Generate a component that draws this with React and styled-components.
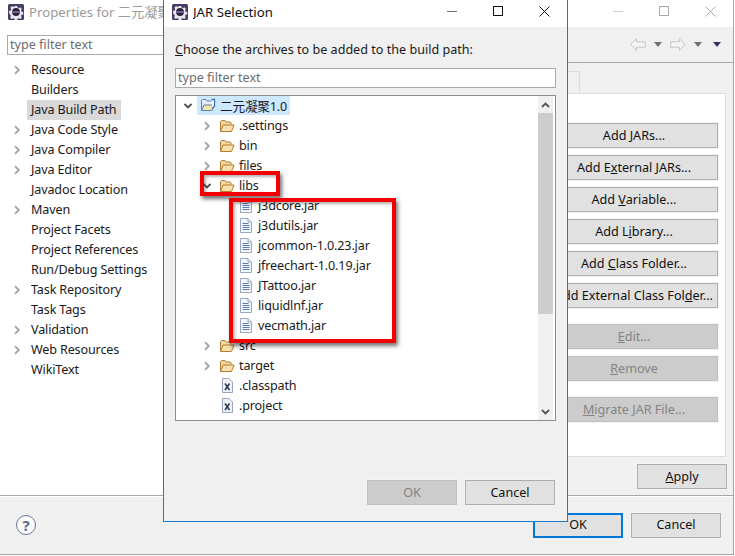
import React from 'react';
import styled, { createGlobalStyle } from 'styled-components';

const GlobalStyle = createGlobalStyle`
  html, body {
    margin: 0;
    padding: 0;
    background: #fff;
  }
  body {
    font-family: "Noto Sans", "Noto Sans CJK SC", sans-serif;
    font-size: 12.6px;
    color: #1a1a1a;
  }
`;

const Desktop = styled.div`
  position: relative;
  width: 735px;
  height: 556px;
  overflow: hidden;
`;

/* windows */
const BackWindow = styled.div`
  position: absolute;
  left: 0;
  top: 0;
  width: 734px;
  height: 555px;
  box-sizing: border-box;
  display: flex;
  flex-direction: column;
  background: #f0f0f0;
  border-right: 1px solid #a5a5a5;
  border-bottom: 1px solid #a5a5a5;
`;

const FrontWindow = styled.div`
  position: absolute;
  left: 163px;
  top: 0;
  width: 405px;
  height: 522px;
  box-sizing: border-box;
  display: flex;
  flex-direction: column;
  background: #f0f0f0;
  border: 1px solid #1979ca;
  border-top: 0;
`;

const TitleBar = styled.div`
  height: 27px;
  flex: none;
  display: flex;
  align-items: center;
  background: #fff;
  padding-left: ${p => p.$pad}px;
`;

const Title = styled.span`
  flex: 1;
  margin-left: 5px;
  padding-bottom: 4px;
  font-size: 13.2px;
  white-space: nowrap;
  overflow: hidden;
  color: ${p => (p.$dim ? '#9a9a9a' : '#111')};
`;

const WinButton = styled.div`
  width: 46px;
  height: 27px;
  box-sizing: border-box;
  padding-bottom: 5px;
  display: flex;
  align-items: center;
  justify-content: center;
  color: ${p => (p.$dim ? '#aaa' : '#111')};
`;

const GearSvg = styled.svg`
  flex: none;
  margin-bottom: 4px;
`;

/* back window */
const BackBody = styled.div`
  flex: 1;
  display: flex;
  min-height: 0;
`;

const Sidebar = styled.div`
  width: 175px;
  flex: none;
  box-sizing: border-box;
  background: #fff;
  padding: 8px 0 0 7px;
  display: flex;
  flex-direction: column;
`;

const FilterInput = styled.div`
  height: 20px;
  box-sizing: border-box;
  flex: none;
  display: flex;
  align-items: center;
  padding: 0 0 1px 2px;
  background: #fff;
  border: 1px solid #a9a9a9;
  color: #6d6d6d;
  margin-bottom: ${p => p.$mb || 0}px;
`;

const SideList = styled.div`
  display: flex;
  flex-direction: column;
  margin-top: 5px;
  letter-spacing: -0.15px;
`;

const SideRow = styled.div`
  height: 20px;
  display: flex;
  align-items: center;
`;

const Slot = styled.div`
  width: ${p => p.$w}px;
  flex: none;
  display: flex;
  align-items: center;
  justify-content: center;
`;

const SideLabel = styled.span`
  height: 20px;
  line-height: 19px;
  padding: 0 4px;
  white-space: nowrap;
  background: ${p => (p.$active ? '#d9d9d9' : 'transparent')};
`;

const Main = styled.div`
  flex: 1;
  display: flex;
  flex-direction: column;
  min-width: 0;
`;

const NavBar = styled.div`
  height: 36px;
  flex: none;
  box-sizing: border-box;
  border-bottom: 1px solid #a8a8a8;
  display: flex;
  align-items: center;
  justify-content: flex-end;
  gap: 8px;
  padding: 0 9px 0 0;
`;

const TabStrip = styled.div`
  height: 22px;
  flex: none;
  margin-top: 8px;
  display: flex;
  justify-content: flex-end;
  padding-right: 153px;
`;

const Tab = styled.div`
  width: 120px;
  box-sizing: border-box;
  border: 1px solid #dcdcdc;
  border-bottom: 0;
`;

const Panel = styled.div`
  width: 551px;
  height: 364px;
  flex: none;
  box-sizing: border-box;
  background: #fff;
  border: 1px solid #dedede;
  padding: 29px 7px 0 0;
  display: flex;
  flex-direction: column;
  align-items: flex-end;
  gap: 7px;
`;

const ButtonGap = styled.div`
  height: 2px;
`;

const Button = styled.div`
  width: ${p => p.$w || 90}px;
  height: 25px;
  box-sizing: border-box;
  flex: none;
  display: flex;
  align-items: center;
  justify-content: center;
  padding-bottom: 1px;
  white-space: nowrap;
  overflow: hidden;
  background: ${p => (p.$off ? '#cccccc' : '#e1e1e1')};
  color: ${p => (p.$off ? '#838383' : '#111')};
  border: ${p => (p.$main ? '2px solid #0078d7' : `1px solid ${p.$off ? '#bfbfbf' : '#adadad'}`)};
  box-shadow: ${p => (p.$main ? 'none' : '0 0 0 1px #f4f4f4')};
`;

const ApplyRow = styled.div`
  flex: none;
  display: flex;
  justify-content: flex-end;
  margin-top: 7px;
  padding-right: 6px;
`;

const BottomBar = styled.div`
  height: 59px;
  flex: none;
  box-sizing: border-box;
  border-top: 1px solid #a8a8a8;
  box-shadow: inset 0 1px 0 #fff;
  display: flex;
  align-items: center;
  padding: 0 12px 0 16px;
  gap: 8px;
`;

const HelpIcon = styled.div`
  width: 20px;
  height: 20px;
  box-sizing: border-box;
  border: 1px solid #66789a;
  border-radius: 50%;
  background: #fbfbfb;
  display: flex;
  align-items: center;
  justify-content: center;
  color: #5a6c90;
  font-weight: 700;
  font-size: 15px;
  margin: 0 auto 1px 0;
`;

/* dialog */
const DialogBody = styled.div`
  flex: 1;
  display: flex;
  flex-direction: column;
  padding: 0 11px 16px;
`;

const Prompt = styled.div`
  height: 41px;
  flex: none;
  display: flex;
  align-items: center;
  padding-top: 3px;
  box-sizing: border-box;
`;

const Tree = styled.div`
  height: 326px;
  flex: none;
  box-sizing: border-box;
  display: flex;
  background: #fff;
  border: 1px solid #8c8c94;
  overflow: hidden;
  letter-spacing: -0.15px;
`;

const TreeList = styled.div`
  flex: 1;
  display: flex;
  flex-direction: column;
`;

const TreeRow = styled.div`
  height: 20px;
  flex: none;
  display: flex;
  align-items: center;
  padding-left: ${p => 4 + p.$depth * 19}px;
`;

const TreeLabel = styled.div`
  display: flex;
  align-items: center;
  gap: 4px;
  height: 19px;
  margin: 0 0 1px 1px;
  padding: 0 3px;
  white-space: nowrap;
  background: ${p => (p.$active ? '#cde8ff' : 'transparent')};
`;

const ScrollBar = styled.div`
  width: 15px;
  flex: none;
  margin-right: 2px;
  display: flex;
  flex-direction: column;
  background: #f0f0f0;
`;

const ScrollArrow = styled.div`
  height: 17px;
  flex: none;
  display: flex;
  align-items: center;
  justify-content: center;
`;

const ScrollThumb = styled.div`
  height: 201px;
  flex: none;
  background: #cdcdcd;
`;

const ScrollTrack = styled.div`
  flex: 1;
`;

const DialogButtons = styled.div`
  margin-top: auto;
  display: flex;
  justify-content: flex-end;
  gap: 8px;
  padding-right: 1px;
`;

/* red marks drawn over the screenshot */
const Mark = styled.div`
  position: absolute;
  left: ${p => p.$x}px;
  top: ${p => p.$y}px;
  width: ${p => p.$w}px;
  height: ${p => p.$h}px;
  box-sizing: border-box;
  border: 4px solid #f50000;
  box-shadow: 2px 3px 4px rgba(0, 0, 0, 0.55), inset 2px 2px 3px rgba(0, 0, 0, 0.3);
`;

const Gear = () => (
  <GearSvg width="16" height="16" viewBox="0 0 16 16">
    <rect width="16" height="16" rx="1.5" fill="#4a3a68" />
    <path d="M6.6 1h2.8l.4 1.9 1.5.7 1.7-1 1.9 1.9-1 1.7.6 1.5 1.9.4v2.8l-1.9.4-.7 1.5 1 1.6-1.9 1.9-1.6-1-1.5.7-.4 1.8H6.6l-.4-1.8-1.5-.7-1.7 1-1.9-1.9 1-1.6-.7-1.5L0 9.400V6.600l1.900-.4.6-1.500-1-1.700 1.900-1.900 1.700 1 1.500-.7z" fill="#e9e7ee" transform="translate(1.1 1.100) scale(.86)" />
    <circle cx="8" cy="8" r="3.900" fill="#2b2438" />
    <rect x="4.300" y="7.200" width="7.400" height="1.700" fill="#7f6aa8" />
  </GearSvg>
);

const MinIcon = () => (
  <svg width="10" height="10" viewBox="0 0 10 10"><path d="M0 5.500h10" stroke="currentColor" strokeOpacity=".6" fill="none" /></svg>
);
const MaxIcon = () => (
  <svg width="10" height="10" viewBox="0 0 10 10"><rect x=".5" y=".5" width="9" height="9" stroke="currentColor" fill="none" /></svg>
);
const CloseIcon = () => (
  <svg width="11" height="11" viewBox="0 0 11 11"><path d="M.5.500l10 10M10.500.500l-10 10" stroke="currentColor" fill="none" /></svg>
);

const Chevron = ({ open, color }) => (
  <svg width="10" height="10" viewBox="0 0 10 10">
    <path
      d={open ? 'M1.500 3l3.500 3.500L8.500 3' : 'M3 1.200L6.800 5 3 8.800'}
      stroke={color || (open ? '#4d4d4d' : '#a3a3a3')}
      strokeWidth="1.800"
      fill="none"
    />
  </svg>
);

const Folder = () => (
  <svg width="16" height="14" viewBox="0 0 16 14">
    <path d="M1.500 12.500V2.500l1-1h3.500l1 1.500h4.500l.5 1v1.500" fill="#f1d7a0" stroke="#b0843f" />
    <path d="M1.500 12.500l2.500-6.500h11l-2.500 6.500z" fill="#f7e0ac" stroke="#bb7c30" />
  </svg>
);

const ProjectFolder = () => (
  <svg width="16" height="15" viewBox="0 0 16 15">
    <path d="M1.500 12.500V2.500l1-1h3.500l1 1.500h5l.5 1v2" fill="#e4edf8" stroke="#5b83b8" />
    <path d="M1.500 12.500l2.500-5.500h10.500l-2.500 5.500z" fill="#f6e3a8" stroke="#5b83b8" />
    <path d="M11.500 1.500h3v6.500l-2.500 2.500" stroke="#3f74c0" strokeWidth="1.300" fill="#fff" />
  </svg>
);

const FileIcon = () => (
  <svg width="12" height="15" viewBox="0 0 12 15">
    <path d="M.5.500h7.500l3.500 3.500v10.500H.5z" fill="#f3f6fb" stroke="#9aa8c0" />
    <path d="M8 .500v3.500h3.500" fill="#dfe6f1" stroke="#9aa8c0" />
    <path d="M2.500 5.500h6M2.500 7.500h7M2.500 9.500h7M2.500 11.500h7" stroke="#5d7db4" />
  </svg>
);

const XmlIcon = () => (
  <svg width="11" height="15" viewBox="0 0 11 15">
    <path d="M.5.500h6.500l3.500 3.500v10.500H.5z" fill="#eef1f7" stroke="#9aa4b8" />
    <path d="M3 5.500l4.500 6.500M7.500 5.500L3 12" stroke="#24344f" strokeWidth="1.500" fill="none" />
  </svg>
);

const BackArrow = ({ flip }) => (
  <svg width="16" height="13" viewBox="0 0 16 13" style={flip ? { transform: 'scaleX(-1)' } : undefined}>
    <path d="M.7 6.500L6.500.8v3h8.800v5.400H6.500v3z" fill="#f4f4f4" stroke="#c4c4c4" />
  </svg>
);

const Drop = ({ color }) => (
  <svg width="8" height="5" viewBox="0 0 8 5"><path d="M0 0h8L4 5z" fill={color} /></svg>
);

const sideItems = [
  ['Resource', true], ['Builders'], ['Java Build Path', false, true], ['Java Code Style', true],
  ['Java Compiler', true], ['Java Editor', true], ['Javadoc Location'], ['Maven', true],
  ['Project Facets'], ['Project References'], ['Run/Debug Settings'], ['Task Repository', true],
  ['Task Tags'], ['Validation', true], ['Web Resources', true], ['WikiText'],
];

const treeItems = [
  { name: '二元凝聚1.0', depth: 0, kind: 'project', chevron: 'open', active: true },
  { name: '.settings', depth: 1, kind: 'folder', chevron: 'closed' },
  { name: 'bin', depth: 1, kind: 'folder', chevron: 'closed' },
  { name: 'files', depth: 1, kind: 'folder', chevron: 'closed' },
  { name: 'libs', depth: 1, kind: 'folder', chevron: 'open' },
  { name: 'j3dcore.jar', depth: 2, kind: 'file' },
  { name: 'j3dutils.jar', depth: 2, kind: 'file' },
  { name: 'jcommon-1.0.23.jar', depth: 2, kind: 'file' },
  { name: 'jfreechart-1.0.19.jar', depth: 2, kind: 'file' },
  { name: 'JTattoo.jar', depth: 2, kind: 'file' },
  { name: 'liquidlnf.jar', depth: 2, kind: 'file' },
  { name: 'vecmath.jar', depth: 2, kind: 'file' },
  { name: 'src', depth: 1, kind: 'folder', chevron: 'closed' },
  { name: 'target', depth: 1, kind: 'folder', chevron: 'closed' },
  { name: '.classpath', depth: 1, kind: 'xml' },
  { name: '.project', depth: 1, kind: 'xml' },
];

const icons = {
  project: <ProjectFolder />,
  folder: <Folder />,
  file: <FileIcon />,
  xml: <XmlIcon />,
};

const WindowButtons = ({ dim }) => (
  <>
    <WinButton $dim={dim}><MinIcon /></WinButton>
    <WinButton $dim={dim}><MaxIcon /></WinButton>
    <WinButton $dim={dim}><CloseIcon /></WinButton>
  </>
);

export default function App() {
  return (
    <Desktop>
      <GlobalStyle />
      <BackWindow>
        <TitleBar $pad={8}>
          <Gear />
          <Title $dim>Properties for 二元凝聚</Title>
          <WindowButtons dim />
        </TitleBar>
        <BackBody>
          <Sidebar>
            <FilterInput>type filter text</FilterInput>
            <SideList>
              {sideItems.map(([label, hasKids, active]) => (
                <SideRow key={label}>
                  <Slot $w={20}>{hasKids && <Chevron />}</Slot>
                  <SideLabel $active={active}>{label}</SideLabel>
                </SideRow>
              ))}
            </SideList>
          </Sidebar>
          <Main>
            <NavBar>
              <BackArrow />
              <Drop color="#707070" />
              <BackArrow flip />
              <Drop color="#707070" />
              <Slot $w={14}><Drop color="#3d2a63" /></Slot>
            </NavBar>
            <TabStrip><Tab /></TabStrip>
            <Panel>
              <Button $w={168}><span>Add <u>J</u>ARs...</span></Button>
              <Button $w={168}><span>Add E<u>x</u>ternal JARs...</span></Button>
              <Button $w={168}><span>Add <u>V</u>ariable...</span></Button>
              <Button $w={168}><span>Add L<u>i</u>brary...</span></Button>
              <Button $w={168}><span>Add <u>C</u>lass Folder...</span></Button>
              <Button $w={168}><span>Add External Class Fol<u>d</u>er...</span></Button>
              <ButtonGap />
              <Button $w={168} $off><span><u>E</u>dit...</span></Button>
              <Button $w={168} $off><span><u>R</u>emove</span></Button>
              <ButtonGap />
              <Button $w={168} $off><span><u>M</u>igrate JAR File...</span></Button>
            </Panel>
            <ApplyRow>
              <Button><span><u>A</u>pply</span></Button>
            </ApplyRow>
          </Main>
        </BackBody>
        <BottomBar>
          <HelpIcon>?</HelpIcon>
          <Button $main>OK</Button>
          <Button>Cancel</Button>
        </BottomBar>
      </BackWindow>

      <FrontWindow>
        <TitleBar $pad={8}>
          <Gear />
          <Title>JAR Selection</Title>
          <WindowButtons />
        </TitleBar>
        <DialogBody>
          <Prompt><span><u>C</u>hoose the archives to be added to the build path:</span></Prompt>
          <FilterInput $mb={7}>type filter text</FilterInput>
          <Tree>
            <TreeList>
              {treeItems.map(item => (
                <TreeRow key={item.name} $depth={item.depth}>
                  <Slot $w={16}>{item.chevron && <Chevron open={item.chevron === 'open'} />}</Slot>
                  <TreeLabel $active={item.active}>
                    <Slot $w={16}>{icons[item.kind]}</Slot>
                    {item.name}
                  </TreeLabel>
                </TreeRow>
              ))}
            </TreeList>
            <ScrollBar>
              <ScrollArrow>
                <svg width="9" height="6" viewBox="0 0 9 6"><path d="M1 5l3.500-3.500L8 5" stroke="#555" strokeWidth="1.800" fill="none" /></svg>
              </ScrollArrow>
              <ScrollThumb />
              <ScrollTrack />
              <ScrollArrow>
                <svg width="9" height="6" viewBox="0 0 9 6"><path d="M1 1l3.500 3.500L8 1" stroke="#555" strokeWidth="1.800" fill="none" /></svg>
              </ScrollArrow>
            </ScrollBar>
          </Tree>
          <DialogButtons>
            <Button $off>OK</Button>
            <Button>Cancel</Button>
          </DialogButtons>
        </DialogBody>
      </FrontWindow>

      <Mark $x={200} $y={171} $w={80} $h={25} />
      <Mark $x={229} $y={198} $w={167} $h={145} />
    </Desktop>
  );
}
